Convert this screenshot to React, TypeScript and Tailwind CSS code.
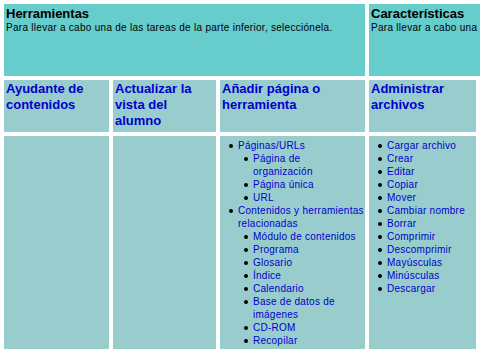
import React from 'react';

type Item = { label: string; children?: string[] };

const paginaItems: Item[] = [
  { label: 'Páginas/URLs', children: ['Página de organización', 'Página única', 'URL'] },
  {
    label: 'Contenidos y herramientas relacionadas',
    children: [
      'Módulo de contenidos',
      'Programa',
      'Glosario',
      'Índice',
      'Calendario',
      'Base de datos de imágenes',
      'CD-ROM',
      'Recopilar',
    ],
  },
];

const archivoItems = [
  'Cargar archivo',
  'Crear',
  'Editar',
  'Copiar',
  'Mover',
  'Cambiar nombre',
  'Borrar',
  'Comprimir',
  'Descomprimir',
  'Mayúsculas',
  'Minúsculas',
  'Descargar',
];

const Bullet = () => (
  <span className="absolute left-[-9px] top-[5px] w-[4px] h-[4px] rounded-full bg-black" />
);

const ListRow: React.FC<{ text: string }> = ({ text }) => (
  <li className="relative">
    <Bullet />
    <a className="text-[#0000cc]">{text}</a>
  </li>
);

const Heading: React.FC<{ children: React.ReactNode }> = ({ children }) => (
  <div className="bg-[#99cccc] px-[2px] pt-[1px]">
    <h2 className="text-[13px] leading-[16px] font-bold text-[#0000cc]">{children}</h2>
  </div>
);

export default function App() {
  return (
    <div
      className="w-[480px] h-[349px] overflow-hidden bg-white"
      style={{ fontFamily: '"Liberation Sans", Arial, sans-serif' }}
    >
      <div className="grid w-max grid-cols-[105px_103px_145px_107px_200px] grid-rows-[72px_52px_240px] gap-[4px] p-[4px] pb-0">
        {/* header row */}
        <div className="col-span-3 bg-[#66cccc] px-[2px] pt-[2px]">
          <h1 className="text-[13px] leading-[15px] font-bold text-black">Herramientas</h1>
          <p className="text-[10px] leading-[13px] tracking-[0.28px] text-black">
            Para llevar a cabo una de las tareas de la parte inferior, selecciónela.
          </p>
        </div>
        <div className="col-span-2 bg-[#66cccc] px-[2px] pt-[2px]">
          <h1 className="text-[13px] leading-[15px] font-bold text-black">Características</h1>
          <p className="whitespace-nowrap text-[10px] leading-[13px] tracking-[0.28px] text-black">
            Para llevar a cabo una de las tareas de la parte inferior, selecciónela.
          </p>
        </div>

        {/* title row */}
        <Heading>Ayudante de contenidos</Heading>
        <Heading>Actualizar la vista del alumno</Heading>
        <Heading>Añadir página o herramienta</Heading>
        <Heading>Administrar archivos</Heading>
        <Heading>&nbsp;</Heading>

        {/* content row */}
        <div className="bg-[#99cccc]" />
        <div className="bg-[#99cccc]" />
        <div className="bg-[#99cccc] pt-[3px] pl-[18px]">
          <ul className="text-[10px] leading-[13px] tracking-[0.25px]">
            {paginaItems.map((it) => (
              <li key={it.label} className="relative">
                <Bullet />
                <a className="text-[#0000cc]">{it.label}</a>
                <ul className="pl-[15px] pr-[4px]">
                  {it.children?.map((c) => (
                    <ListRow key={c} text={c} />
                  ))}
                </ul>
              </li>
            ))}
          </ul>
        </div>
        <div className="bg-[#99cccc] pt-[3px] pl-[18px]">
          <ul className="text-[10px] leading-[13px] tracking-[0.25px]">
            {archivoItems.map((a) => (
              <ListRow key={a} text={a} />
            ))}
          </ul>
        </div>
        <div className="bg-[#99cccc]" />
      </div>
    </div>
  );
}
